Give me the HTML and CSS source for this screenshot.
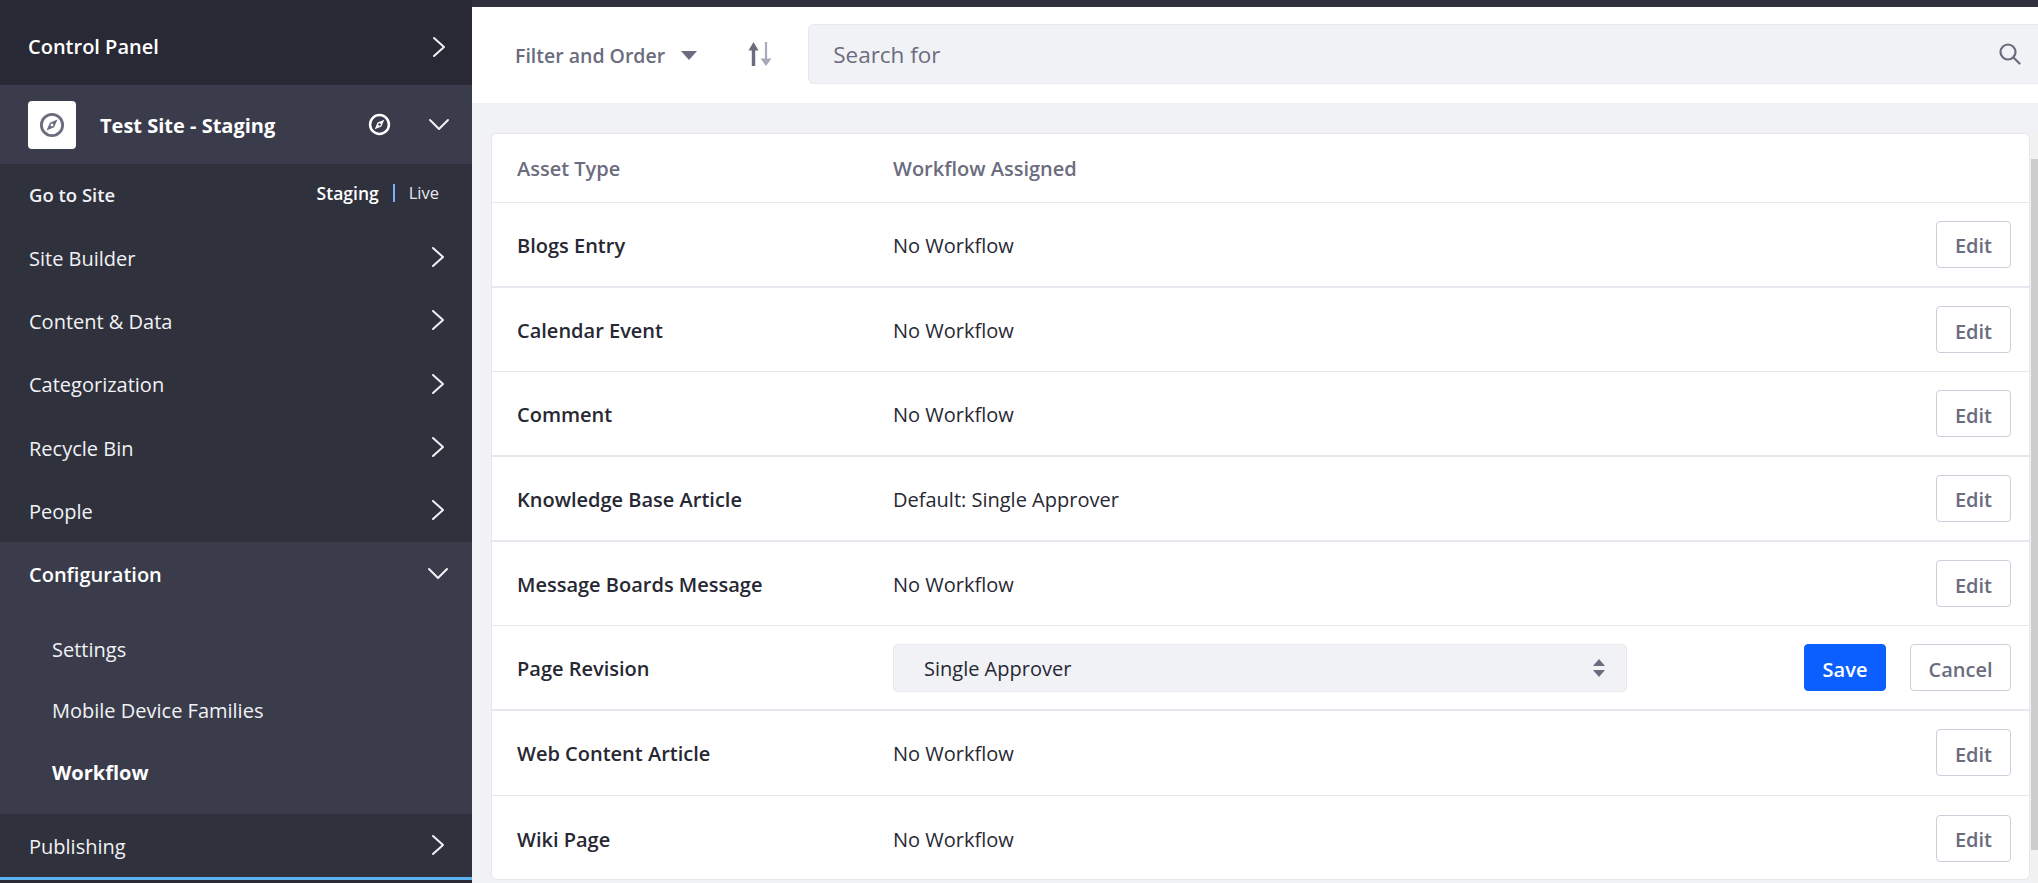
FILE: index.html
```html
<!DOCTYPE html>
<html lang="en">
<head>
<meta charset="utf-8">
<title>Workflow</title>
<link rel="stylesheet" href="styles.css">
</head>
<body>
<svg class="defs" aria-hidden="true">
  <defs>
    <symbol id="chev-r" viewBox="0 0 14 22"><path d="M2 2l10 9-10 9" fill="none" stroke="currentColor" stroke-width="2" stroke-linecap="round" stroke-linejoin="round"/></symbol>
    <symbol id="chev-d" viewBox="0 0 22 14"><path d="M2 2l9 9 9-9" fill="none" stroke="currentColor" stroke-width="2" stroke-linecap="round" stroke-linejoin="round"/></symbol>
    <symbol id="compass" viewBox="0 0 22 22"><circle cx="11" cy="11" r="9" fill="none" stroke="currentColor" stroke-width="2.4"/><path d="M15.6 6.4L12.8 12.8 6.4 15.6 9.2 9.2z" fill="currentColor"/><circle cx="11" cy="11" r="1.2" fill="var(--hole)"/></symbol>
  </defs>
</svg>
<aside class="sidebar">
  <a class="cp-row"><span>Control Panel</span><svg class="chev-r"><use href="#chev-r"/></svg></a>
  <div class="site-row">
    <span class="site-logo"><svg class="compass-lg"><use href="#compass"/></svg></span>
    <span class="site-name">Test Site - Staging</span>
    <svg class="compass-sm"><use href="#compass"/></svg>
    <svg class="chev-d"><use href="#chev-d"/></svg>
  </div>
  <div class="goto-row">
    <span class="goto">Go to Site</span>
    <span class="env"><b>Staging</b><i class="sep"></i><span class="live">Live</span></span>
  </div>
  <nav class="nav">
    <a class="nav-item"><span>Site Builder</span><svg class="chev-r"><use href="#chev-r"/></svg></a>
    <a class="nav-item"><span>Content &amp; Data</span><svg class="chev-r"><use href="#chev-r"/></svg></a>
    <a class="nav-item"><span>Categorization</span><svg class="chev-r"><use href="#chev-r"/></svg></a>
    <a class="nav-item"><span>Recycle Bin</span><svg class="chev-r"><use href="#chev-r"/></svg></a>
    <a class="nav-item"><span>People</span><svg class="chev-r"><use href="#chev-r"/></svg></a>
    <div class="nav-open">
      <a class="nav-item nav-head"><span>Configuration</span><svg class="chev-d"><use href="#chev-d"/></svg></a>
      <a class="sub">Settings</a>
      <a class="sub">Mobile Device Families</a>
      <a class="sub active">Workflow</a>
    </div>
    <a class="nav-item nav-last"><span>Publishing</span><svg class="chev-r"><use href="#chev-r"/></svg></a>
  </nav>
  <div class="sidebar-foot"></div>
</aside>
<main class="main">
  <div class="topstrip"></div>
  <div class="toolbar">
    <button class="filter">Filter and Order<span class="caret"></span></button>
    <svg class="sort" viewBox="0 0 25 24"><path d="M6.500 24V6" stroke="#6b6c7e" stroke-width="3.400" stroke-linecap="round" fill="none"/><path d="M1.500 8.500L6.500 0l5 8.500z" fill="#6b6c7e"/><path d="M19 0v18" stroke="#a7a9bc" stroke-width="2.200" stroke-linecap="round" fill="none"/><path d="M13.500 16.500h11L19 24z" fill="#a7a9bc"/></svg>
    <div class="search">
      <span>Search for</span>
      <svg class="search-ic" viewBox="0 0 22 22"><circle cx="9" cy="9" r="7.500" fill="none" stroke="currentColor" stroke-width="2.200"/><path d="M14.500 14.500l6 6" stroke="currentColor" stroke-width="2.200" stroke-linecap="round"/></svg>
    </div>
  </div>
  <div class="content">
    <section class="card">
      <div class="row head"><div class="c1">Asset Type</div><div class="c2">Workflow Assigned</div></div>
      <div class="row thick"><div class="c1">Blogs Entry</div><div class="c2">No Workflow</div><button class="btn">Edit</button></div>
      <div class="row"><div class="c1">Calendar Event</div><div class="c2">No Workflow</div><button class="btn">Edit</button></div>
      <div class="row thick"><div class="c1">Comment</div><div class="c2">No Workflow</div><button class="btn">Edit</button></div>
      <div class="row thick"><div class="c1">Knowledge Base Article</div><div class="c2">Default: Single Approver</div><button class="btn">Edit</button></div>
      <div class="row"><div class="c1">Message Boards Message</div><div class="c2">No Workflow</div><button class="btn">Edit</button></div>
      <div class="row thick">
        <div class="c1">Page Revision</div>
        <div class="select"><span>Single Approver</span><svg class="updown" viewBox="0 0 12 18"><path d="M6 0l6 7H0zM6 18l6-7H0z" fill="#6b6c7e"/></svg></div>
        <div class="actions"><button class="btn primary">Save</button><button class="btn cancel">Cancel</button></div>
      </div>
      <div class="row"><div class="c1">Web Content Article</div><div class="c2">No Workflow</div><button class="btn">Edit</button></div>
      <div class="row last"><div class="c1">Wiki Page</div><div class="c2">No Workflow</div><button class="btn">Edit</button></div>
    </section>
    <div class="scrollbar"><div class="thumb"></div></div>
  </div>
</main>
</body>
</html>
```
FILE: styles.css
```css
* { box-sizing: border-box; }
html, body { margin: 0; height: 100%; overflow: hidden; }
body {
  display: flex;
  width: 2038px;
  height: 883px;
  font-family: "Open Sans", "Noto Sans", sans-serif;
  font-size: 20px;
  background: #f1f2f5;
  color: #272833;
}
.defs { position: absolute; width: 0; height: 0; }

.sidebar { width: 472px; flex: none; display: flex; flex-direction: column; background: #2f313d; color: #fff; }
.cp-row { height: 85px; flex: none; display: flex; align-items: center; justify-content: space-between; padding: 8px 26px 0 28px; background: #282934; font-weight: 600; font-size: 20px; }
.chev-r { width: 14px; height: 22px; color: #f1f2f5; }
.chev-d { width: 22px; height: 14px; color: #f1f2f5; }
.site-row { height: 79px; flex: none; display: flex; align-items: center; padding: 0 22px 0 28px; background: #3a3c4b; --hole: #3a3c4b; }
.site-logo { width: 48px; height: 48px; border-radius: 4px; background: #fff; display: flex; align-items: center; justify-content: center; color: #6b6c7e; --hole: #fff; }
.compass-lg { width: 26px; height: 26px; }
.site-name { margin-left: 24px; padding-top: 2px; font-weight: 700; font-size: 20px; flex: 1; }
.compass-sm { width: 23px; height: 23px; margin-right: 37px; color: #fff; }
.goto-row { height: 61.500px; flex: none; display: flex; align-items: center; justify-content: space-between; padding: 0 33px 0 29px; }
.goto { font-weight: 600; font-size: 18.500px; color: #f1f2f5; }
.env { display: flex; align-items: center; font-size: 17.500px; color: #e7e7ed; margin-top: -4px; }
.env b { font-weight: 600; color: #fff; }
.live { font-size: 16.500px; }
.sep { display: block; width: 2px; height: 18px; margin: 0 14px 0 14px; background: #80acff; }

.nav { display: flex; flex-direction: column; }
.nav-item { height: 63.300px; flex: none; display: flex; align-items: center; justify-content: space-between; padding: 0 27px 0 29px; font-size: 20px; color: #f1f2f5; }
.nav-item span { padding-top: 2px; }
.nav-open { background: #3a3c4b; height: 272px; flex: none; color: #fff; }
.nav-head { font-weight: 600; padding-right: 23px; color: #fff; }
.sub { display: flex; align-items: center; height: 61.500px; padding-left: 52px; font-size: 20px; color: #f1f2f5; }
.nav-head + .sub { margin-top: 13px; }
.sub.active { font-weight: 700; color: #fff; }
.nav-last { height: 63px; }
.sidebar-foot { margin-top: auto; height: 6px; background: #282934; border-top: 3px solid #5cb1ee; }

.main { flex: 1; min-width: 0; display: flex; flex-direction: column; }
.topstrip { height: 7px; flex: none; background: #2f313d; }
.toolbar { height: 96px; flex: none; display: flex; align-items: center; background: #fff; padding: 0 0 2px 43px; }
.filter { display: flex; align-items: center; border: 0; padding: 2px 0 0; background: none; font: 600 19.500px "Open Sans", "Noto Sans", sans-serif; color: #6b6c7e; }
.caret { width: 0; height: 0; margin-left: 16px; border: 8px solid transparent; border-top: 9px solid #6b6c7e; border-bottom: 0; }
.sort { width: 25px; height: 24px; margin-left: 50px; flex: none; }
.search { flex: 1; height: 60px; margin-left: 36px; display: flex; align-items: center; justify-content: space-between; padding: 0 17px 0 24px; background: #f1f2f5; border: 1px solid #e7e7ed; border-right: 0; border-radius: 6px 0 0 6px; font-size: 22.500px; color: #6b6c7e; }
.search-ic { width: 22px; height: 22px; color: #6b6c7e; }

.content { position: relative; flex: 1; min-height: 0; padding: 30px 8px 0 19px; }
.card { background: #fff; border: 1px solid #e7e7ed; border-radius: 6px; height: 747px; }
.row { display: flex; align-items: center; height: 84.700px; padding: 0 18px 0 25px; border-bottom: 1px solid #e7e7ed; }
.row.thick { border-bottom-width: 2px; }
.row.last { border-bottom: 0; }
.row.head { height: 69px; color: #6b6c7e; font-weight: 600; }
.c1 { width: 376px; flex: none; padding-top: 2px; font-weight: 600; }
.c2 { flex: 1; padding-top: 2px; }
.head .c1, .head .c2 { padding-top: 1px; }
.btn { height: 47px; min-width: 75px; padding: 3px 18px 0; border: 1px solid #cdced9; border-radius: 4px; background: #fff; font: 600 20px "Open Sans", "Noto Sans", sans-serif; color: #6b6c7e; }
.btn.primary { width: 82px; min-width: 0; padding: 3px 0 0; background: #0b5fff; border-color: #0b5fff; color: #fff; }
.btn.cancel { width: 101px; padding: 3px 0 0; }
.select { width: 734px; height: 48px; display: flex; align-items: center; justify-content: space-between; padding: 0 21px 0 30px; background: #f1f2f5; border: 1px solid #e7e7ed; border-radius: 4px; }
.select span { padding-top: 2px; }
.updown { width: 12px; height: 18px; }
.actions { margin-left: auto; display: flex; gap: 24px; }

.scrollbar { position: absolute; right: 0; top: 28px; bottom: 0; width: 7px; background: #f1f1f1; padding-top: 28px; padding-bottom: 33px; }
.thumb { height: 100%; background: #cdcdcd; }
```
